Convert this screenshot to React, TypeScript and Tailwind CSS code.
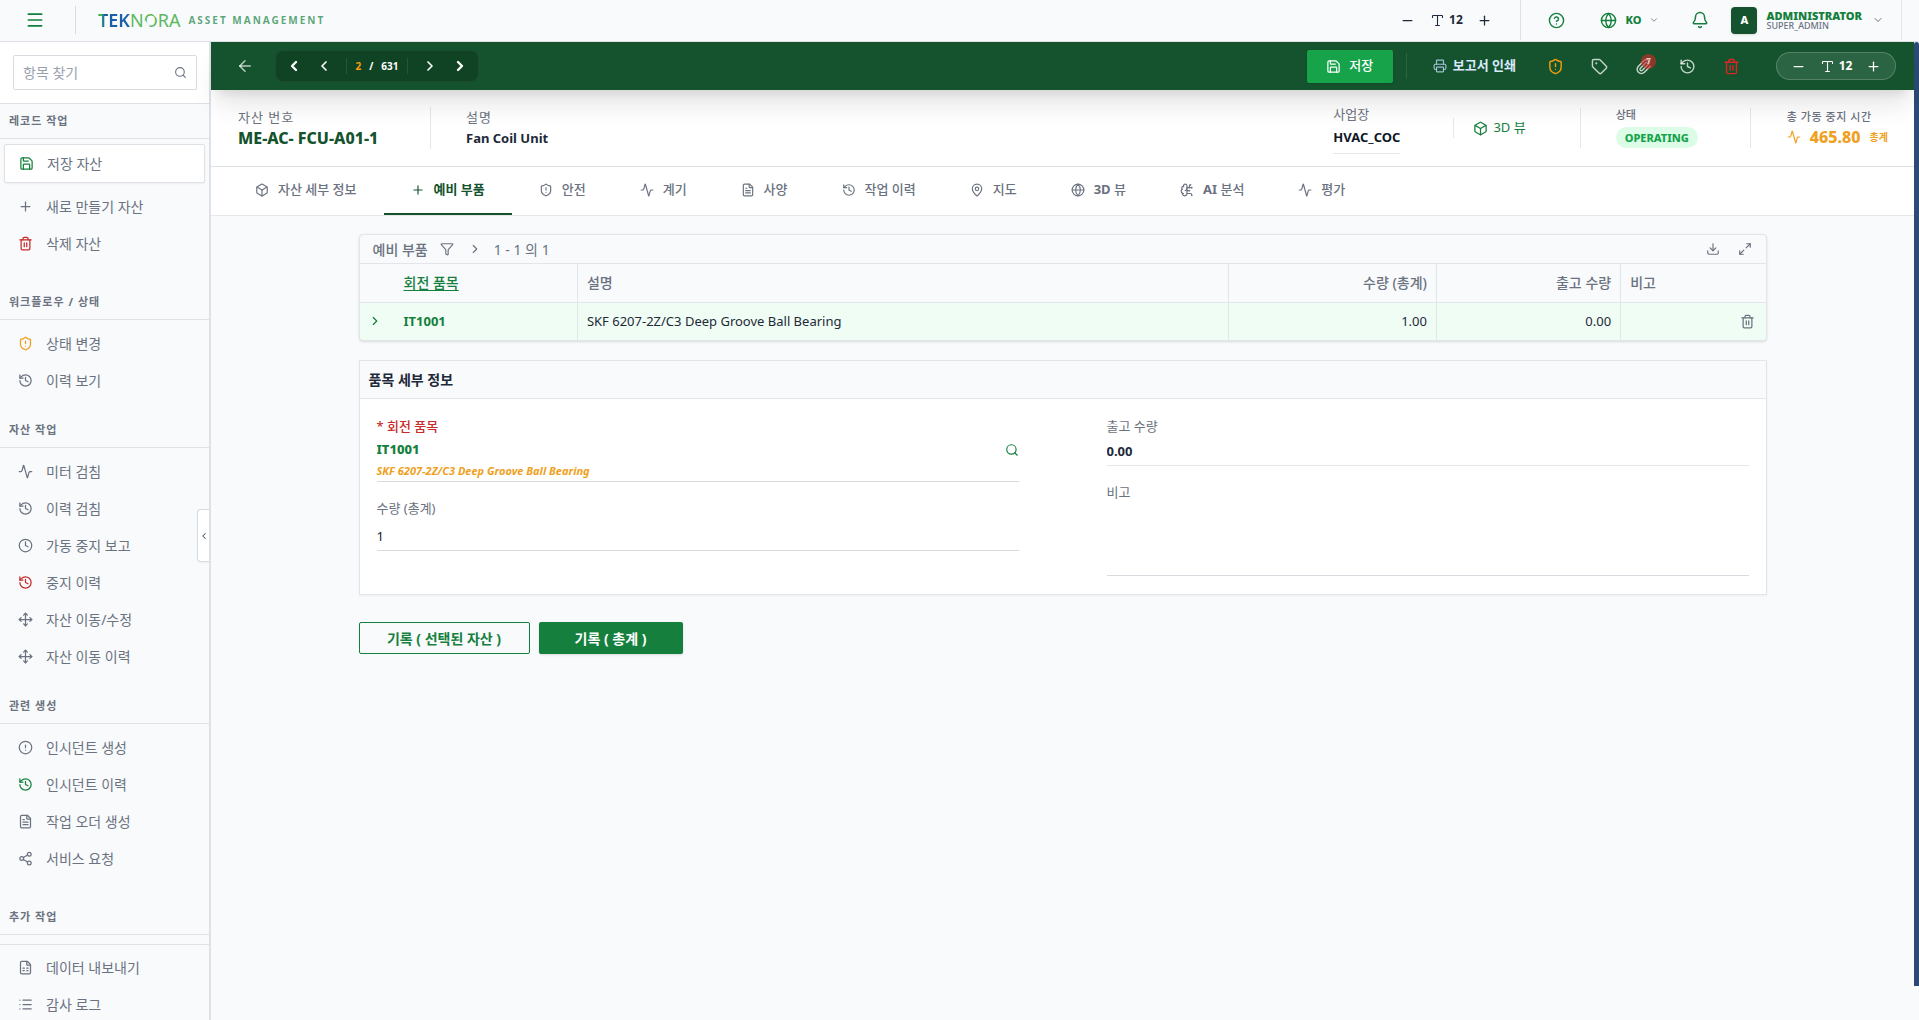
import type { ReactNode } from "react";
import {
  Activity,
  ArrowLeft,
  Bell,
  Box,
  BrainCircuit,
  ChevronDown,
  ChevronLeft,
  ChevronRight,
  CircleAlert,
  CircleHelp,
  Clock,
  Download,
  FileSpreadsheet,
  FileText,
  Filter,
  Globe,
  History,
  List,
  type LucideIcon,
  MapPin,
  Maximize2,
  Menu,
  Minus,
  Move,
  Paperclip,
  Plus,
  Printer,
  Save,
  Search,
  Share2,
  ShieldAlert,
  Tag,
  Trash2,
  Type,
} from "lucide-react";
import clsx from "clsx";

type ActionItem = {
  label: string;
  icon: LucideIcon;
  iconClass?: string;
  primary?: boolean;
};

type ActionSection = {
  title: string;
  items: ActionItem[];
  spacious?: boolean;
};

type TabItem = {
  prefix?: string;
  label: string;
  icon: LucideIcon;
  active?: boolean;
};

const SECTIONS: ActionSection[] = [
  {
    title: "레코드 작업",
    spacious: true,
    items: [
      { label: "저장 자산", icon: Save, iconClass: "text-[#15803d]", primary: true },
      { label: "새로 만들기 자산", icon: Plus },
      { label: "삭제 자산", icon: Trash2, iconClass: "text-[#c92a2a]" },
    ],
  },
  {
    title: "워크플로우 / 상태",
    items: [
      { label: "상태 변경", icon: ShieldAlert, iconClass: "text-[#f0a020]" },
      { label: "이력 보기", icon: History },
    ],
  },
  {
    title: "자산 작업",
    items: [
      { label: "미터 검침", icon: Activity },
      { label: "이력 검침", icon: History },
      { label: "가동 중지 보고", icon: Clock },
      { label: "중지 이력", icon: History, iconClass: "text-[#c92a2a]" },
      { label: "자산 이동/수정", icon: Move },
      { label: "자산 이동 이력", icon: Move },
    ],
  },
  {
    title: "관련 생성",
    spacious: true,
    items: [
      { label: "인시던트 생성", icon: CircleAlert },
      { label: "인시던트 이력", icon: History, iconClass: "text-[#15803d]" },
      { label: "작업 오더 생성", icon: FileText },
      { label: "서비스 요청", icon: Share2 },
    ],
  },
  { title: "추가 작업", items: [] },
];

const FOOTER_ITEMS: ActionItem[] = [
  { label: "데이터 내보내기", icon: FileSpreadsheet },
  { label: "감사 로그", icon: List },
];

const TABS: TabItem[] = [
  { label: "자산 세부 정보", icon: Box },
  { label: "예비 부품", icon: Plus, active: true },
  { label: "안전", icon: ShieldAlert },
  { label: "계기", icon: Activity },
  { label: "사양", icon: FileText },
  { label: "작업 이력", icon: History },
  { label: "지도", icon: MapPin },
  { prefix: "3D", label: " 뷰", icon: Globe },
  { prefix: "AI", label: " 분석", icon: BrainCircuit },
  { label: "평가", icon: Activity },
];

function Logo() {
  return (
    <div className="flex text-[18px] leading-none">
      <span className="bg-linear-to-r from-[#4caf50] from-10% to-[#1b5fa8] to-20% bg-clip-text font-semibold text-transparent">TEK</span>
      <span className="text-[#5cb85c]">N</span>
      <span className="relative text-[#5cb85c]">
        O
        <svg viewBox="0 0 14 18" className="absolute inset-0 h-full w-full" aria-hidden="true">
          <path d="M9 2 L14 7 M0 10 L5 16" stroke="#f8fafc" strokeWidth="2.2" fill="none" />
        </svg>
      </span>
      <span className="text-[#5cb85c]">RA</span>
    </div>
  );
}

function FontSizer({ inverted }: { inverted?: boolean }) {
  return (
    <div
      className={clsx(
        "flex items-center justify-between",
        inverted ? "h-7 w-30 rounded-full border border-white/20 bg-white/10 px-3.5 text-white" : "w-[92px] text-gray-800",
      )}
    >
      <button aria-label="글꼴 축소">
        <Minus size={15} />
      </button>
      <span className="flex items-center gap-1 text-[12px] font-bold">
        <Type size={15} strokeWidth={1.75} />
        12
      </span>
      <button aria-label="글꼴 확대">
        <Plus size={15} />
      </button>
    </div>
  );
}

function TopBar() {
  return (
    <header className="flex h-[42px] shrink-0 items-center border-b border-[#dee2e6] bg-[#f8fafc] pb-px pl-[25px]">
      <button aria-label="메뉴" className="text-[#15803d]">
        <Menu size={20} />
      </button>
      <div className="mx-[30px] h-7 w-px shrink-0 bg-[#d8dce1]" />
      <div className="-ml-2 flex items-center gap-2">
        <Logo />
        <span className="text-[10px] font-bold tracking-[2px] text-[#15803d]/70">ASSET MANAGEMENT</span>
      </div>

      <div className="ml-auto flex h-full items-center">
        <FontSizer />
        <div className="ml-7 h-full w-px bg-[#dee2e6]" />
        <button aria-label="도움말" className="ml-[27px] text-[#15803d]">
          <CircleHelp size={17} />
        </button>
        <button className="ml-[35px] flex items-center gap-2 text-[11px] font-extrabold text-[#15803d]">
          <Globe size={17} />
          KO
          <ChevronDown size={10} className="text-gray-500" />
        </button>
        <button aria-label="알림" className="ml-8 text-[#15803d]">
          <Bell size={18} />
        </button>
        <button className="ml-[22px] flex items-center text-left">
          <span className="flex h-[27px] w-[26px] items-center justify-center rounded-sm bg-[#14532d] text-[11px] font-extrabold text-white shadow">
            A
          </span>
          <span className="ml-[9px] flex flex-col">
            <span className="text-[11px] leading-[11px] font-black text-[#15803d]">ADMINISTRATOR</span>
            <span className="text-[9px] leading-[9px] font-medium text-gray-500">SUPER_ADMIN</span>
          </span>
          <ChevronDown size={12} className="ml-2.5 text-gray-500" />
        </button>
        <div className="mx-[17px] h-full w-px bg-[#e5e7eb]" />
      </div>
    </header>
  );
}

function ActionButton({ label, icon: Icon, iconClass = "text-[#6b7280]", primary }: ActionItem) {
  return (
    <button
      className={clsx(
        "flex shrink-0 items-center gap-[13px] text-left text-[14px] text-[#6b7280]",
        primary
          ? "mx-1 mb-[5px] h-[39px] rounded-xs border border-[#dee2e6] bg-white px-3.5 shadow-xs"
          : "h-[37px] px-[18px]",
      )}
    >
      <Icon size={15} className={clsx("shrink-0", iconClass)} />
      {label}
    </button>
  );
}

function Sidebar() {
  return (
    <aside className="relative flex w-[211px] shrink-0 flex-col border-r-2 border-[#dee2e6] bg-[#f8fafc]">
      <div className="shrink-0 border-b border-[#dee2e6] bg-white py-[13px] pr-3 pl-[13px]">
        <label className="flex h-[35px] items-center rounded-xs border border-[#d8dce1] bg-white px-[9px]">
          <input
            type="text"
            aria-label="항목 찾기"
            placeholder="항목 찾기"
            className="w-full min-w-0 text-[14px] outline-none placeholder:text-gray-400"
          />
          <Search size={13} className="shrink-0 text-[#6b7280]" />
        </label>
      </div>

      <div className="flex min-h-0 flex-1 flex-col overflow-hidden">
        {SECTIONS.map((section) => (
          <section key={section.title} className="flex shrink-0 flex-col">
            <h3 className="flex h-[35px] items-center border-b border-[#dee2e6] px-[9px] text-[11px] font-bold tracking-[1px] text-[#6b7280]">
              {section.title}
            </h3>
            <div className={clsx("flex flex-col pt-[5px]", section.spacious ? "pb-[23px]" : "pb-[14px]")}>
              {section.items.map((item) => (
                <ActionButton key={item.label} {...item} />
              ))}
            </div>
          </section>
        ))}
      </div>

      <div className="flex h-19 shrink-0 flex-col overflow-hidden border-t border-[#dee2e6] pt-1">
        {FOOTER_ITEMS.map((item) => (
          <ActionButton key={item.label} {...item} />
        ))}
      </div>

      <button
        aria-label="사이드바 접기"
        className="absolute top-[467px] right-0 flex h-[53px] w-3 items-center justify-center rounded-l-sm border border-r-0 border-[#d8dce1] bg-white text-gray-600 shadow-xs"
      >
        <ChevronLeft size={10} strokeWidth={2.5} />
      </button>
    </aside>
  );
}

function Toolbar() {
  return (
    <div className="relative z-10 flex h-12 shrink-0 items-center bg-[#14532d] pr-[18px] pl-[25px] text-white shadow-xl">
      <button aria-label="뒤로" className="text-white/70">
        <ArrowLeft size={18} />
      </button>
      <div className="ml-[21px] flex h-8 w-[204px] items-center justify-between rounded-lg border border-white/5 bg-black/20 px-2.5">
        <button aria-label="처음"><ChevronLeft size={16} strokeWidth={3.5} /></button>
        <button aria-label="이전"><ChevronLeft size={16} strokeWidth={2.5} /></button>
        <div className="flex h-4 items-center gap-2 border-x border-white/10 px-2 text-[10px] font-bold">
          <span className="text-[#f59e0b]">2</span>
          <span>/</span>
          <span>631</span>
        </div>
        <button aria-label="다음"><ChevronRight size={16} strokeWidth={2.5} /></button>
        <button aria-label="마지막"><ChevronRight size={16} strokeWidth={3.5} /></button>
      </div>

      <div className="ml-auto flex items-center">
        <button className="flex h-[33px] w-[86px] items-center justify-center gap-2 rounded-xs bg-[#16a34a] text-[13px] font-medium shadow">
          <Save size={15} />
          저장
        </button>
        <div className="mx-[13px] h-[26px] w-px bg-white/10" />
        <button className="ml-[13px] flex items-center gap-[6px] text-[13px] font-bold text-[#dbeafe]">
          <Printer size={14} className="text-[#bfdbfe]/80" />
          보고서 인쇄
        </button>
        <div className="ml-[31px] flex items-center gap-[27px] text-white/75">
          <button aria-label="상태 변경" className="text-[#f59e0b]"><ShieldAlert size={17} /></button>
          <button aria-label="태그"><Tag size={17} /></button>
          <button aria-label="첨부 파일" className="relative">
            <Paperclip size={17} />
            <span className="absolute -top-1 -right-1 flex size-[15px] items-center justify-center rounded-full bg-[#dc2626]/60 text-[8px] font-bold">
              7
            </span>
          </button>
          <button aria-label="이력"><History size={17} /></button>
          <button aria-label="삭제" className="text-[#dc2626]"><Trash2 size={17} /></button>
        </div>
        <div className="ml-9">
          <FontSizer inverted />
        </div>
      </div>
    </div>
  );
}

function AssetHeader() {
  return (
    <div className="flex h-[77px] shrink-0 items-center border-b border-[#dee2e6] bg-white pr-[26px] pl-[27px] shadow-sm">
      <div className="flex w-[192px] flex-col pb-[2px]">
        <span className="text-[13px] leading-[22px] tracking-[1px] text-[#6b7280]">자산 번호</span>
        <span className="text-[16px] leading-5 font-extrabold text-[#14532d]">ME-AC- FCU-A01-1</span>
      </div>
      <div className="h-[42px] w-px bg-[#e5e7eb]" />
      <div className="ml-[35px] flex flex-col pb-[2px]">
        <span className="text-[13px] leading-[22px] tracking-[1px] text-[#6b7280]">설명</span>
        <span className="text-[13px] leading-5 font-bold text-gray-800">Fan Coil Unit</span>
      </div>

      <div className="ml-auto flex items-center">
        <div className="flex flex-col">
          <span className="text-[13px] leading-[22px] text-[#6b7280]">사업장</span>
          <span className="border-b border-[#e5e7eb] pb-1 text-[13px] leading-6 font-bold text-gray-900">HVAC_COC</span>
        </div>
        <div className="ml-[53px] h-5 w-px bg-[#e5e7eb]" />
        <button className="ml-[19px] flex items-center gap-[5px] text-[13px] text-[#15803d]">
          <Box size={15} />
          3D 뷰
        </button>
        <div className="ml-[54px] h-10 w-px bg-[#e5e7eb]" />
        <div className="ml-[35px] flex flex-col items-start gap-1 pb-[2px]">
          <span className="text-[11px] leading-4 font-medium text-[#6b7280]">상태</span>
          <span className="rounded-full bg-[#dcfce7] px-[9px] text-[11px] leading-[21px] font-extrabold text-[#16a34a]">
            OPERATING
          </span>
        </div>
        <div className="ml-[52px] h-10 w-px bg-[#e5e7eb]" />
        <div className="ml-9 flex flex-col pb-[2px]">
          <span className="text-[11px] leading-5 font-medium tracking-wider text-[#6b7280]">총 가동 중지 시간</span>
          <span className="flex items-center text-[#f0a020]">
            <Activity size={14} />
            <span className="ml-[9px] text-[16px] leading-5 font-extrabold">465.80</span>
            <span className="ml-[9px] text-[10px] font-bold">총계</span>
          </span>
        </div>
      </div>
    </div>
  );
}

function TabBar() {
  return (
    <nav className="flex h-[49px] shrink-0 border-b border-[#e5e7eb] bg-white px-[17px]">
      {TABS.map(({ prefix, label, icon: Icon, active }) => (
        <button
          key={label}
          className={clsx(
            "flex items-center gap-[9px] border-b-2 px-[27px] text-[13px]",
            active ? "border-[#14532d] font-bold text-[#14532d]" : "border-transparent font-medium text-[#6b7280]",
          )}
        >
          <Icon size={14} />
          <span className="whitespace-pre">
            {prefix && <b>{prefix}</b>}
            {label}
          </span>
        </button>
      ))}
    </nav>
  );
}

function SparePartsTable() {
  return (
    <section className="overflow-hidden rounded-sm border border-[#e2e5e9] bg-[#f8fafc] shadow">
      <div className="flex h-[29px] items-center border-b border-[#e2e5e9] pr-3.5 pl-[13px] text-[14px] text-[#6b7280]">
        <h2 className="font-medium">예비 부품</h2>
        <button aria-label="필터" className="ml-3"><Filter size={14} /></button>
        <button aria-label="다음 페이지" className="ml-3.5"><ChevronRight size={14} /></button>
        <span className="ml-3">1 - 1 의 1</span>
        <div className="ml-auto flex items-center gap-[18px]">
          <button aria-label="다운로드"><Download size={14} /></button>
          <button aria-label="확대"><Maximize2 size={14} /></button>
        </div>
      </div>
      <table className="w-full table-fixed border-collapse text-[14px]">
        <colgroup>
          <col className="w-[15.5%]" />
          <col className="w-[46.3%]" />
          <col className="w-[14.8%]" />
          <col className="w-[13.1%]" />
          <col className="w-[10.3%]" />
        </colgroup>
        <thead>
          <tr className="h-[38px] border-b border-[#e2e5e9] text-[#6b7280]">
            <th className="border-r border-[#e2e5e9] pl-11 text-left font-medium text-[#15803d] underline underline-offset-2">회전 품목</th>
            <th className="border-r border-[#e2e5e9] px-[9px] text-left font-medium">설명</th>
            <th className="border-r border-[#e2e5e9] px-[9px] text-right font-medium">수량 (총계)</th>
            <th className="border-r border-[#e2e5e9] px-[9px] text-right font-medium">출고 수량</th>
            <th className="px-[9px] text-left font-medium">비고</th>
          </tr>
        </thead>
        <tbody>
          <tr className="h-[38px] bg-[#f0fdf4] text-[13px] text-gray-800">
            <td className="border-r border-[#e2e5e9] pl-2">
              <span className="flex items-center gap-[22px] font-bold text-[#15803d]">
                <ChevronRight size={14} />
                IT1001
              </span>
            </td>
            <td className="border-r border-[#e2e5e9] px-[9px]">SKF 6207-2Z/C3 Deep Groove Ball Bearing</td>
            <td className="border-r border-[#e2e5e9] px-[9px] text-right">1.00</td>
            <td className="border-r border-[#e2e5e9] px-[9px] text-right">0.00</td>
            <td className="pr-[11px]">
              <button aria-label="행 삭제" className="ml-auto block text-[#6b7280]"><Trash2 size={15} /></button>
            </td>
          </tr>
        </tbody>
      </table>
    </section>
  );
}

function Field({ label, htmlFor, required, children }: { label: string; htmlFor: string; required?: boolean; children: ReactNode }) {
  return (
    <div className="flex flex-col">
      <label
        htmlFor={htmlFor}
        className={clsx("text-[13px] leading-5", required ? "font-medium text-[#c92a2a]" : "text-[#6b7280]")}
      >
        {required && "* "}
        {label}
      </label>
      {children}
    </div>
  );
}

function ItemDetails() {
  return (
    <section className="border border-[#e2e5e9] bg-white shadow-xs">
      <h2 className="flex h-[38px] items-center border-b border-[#e2e5e9] bg-[#f8fafc] px-[9px] text-[14px] font-bold text-gray-800">
        품목 세부 정보
      </h2>
      <div className="grid grid-cols-2 gap-x-[88px] px-[17px] pt-[17px] pb-[18px]">
        <div className="flex flex-col gap-4">
          <Field label="회전 품목" htmlFor="item" required>
            <div className="border-b border-[#d8dce1] pb-[2px]">
              <div className="flex h-[27px] items-center">
                <input id="item" defaultValue="IT1001" className="min-w-0 flex-1 text-[13px] font-extrabold text-[#15803d] outline-none" />
                <button aria-label="품목 검색" className="text-[#15803d]"><Search size={14} /></button>
              </div>
              <p className="text-[11px] leading-4 font-bold text-[#f0a020] italic">SKF 6207-2Z/C3 Deep Groove Ball Bearing</p>
            </div>
          </Field>
          <Field label="수량 (총계)" htmlFor="qty">
            <input id="qty" defaultValue="1" className="h-[33px] border-b border-[#d8dce1] pt-1 text-[13px] text-gray-900 outline-none" />
          </Field>
        </div>
        <div className="flex flex-col gap-4">
          <Field label="출고 수량" htmlFor="issued">
            <input id="issued" defaultValue="0.00" readOnly className="h-[30px] border-b border-[#e2e5e9] text-[13px] font-bold text-gray-800 outline-none" />
          </Field>
          <Field label="비고" htmlFor="remark">
            <textarea id="remark" className="h-[74px] resize-none border-b border-[#d8dce1] text-[13px] outline-none" />
          </Field>
        </div>
      </div>
    </section>
  );
}

export default function App() {
  return (
    <div className="flex h-screen flex-col overflow-hidden bg-[#f8fafc] font-['Noto_Sans','Noto_Sans_CJK_KR',sans-serif]">
      <TopBar />
      <div className="flex min-h-0 flex-1">
        <Sidebar />
        <main className="flex min-w-0 flex-1 flex-col">
          <Toolbar />
          <AssetHeader />
          <TabBar />
          <div className="flex-1 px-6 pt-[18px]">
            <div className="mx-auto flex max-w-[1408px] flex-col">
              <SparePartsTable />
              <div className="mt-[19px]">
                <ItemDetails />
              </div>
              <div className="mt-[27px] flex gap-[9px] text-[14px] font-bold">
                <button className="h-8 w-[171px] rounded-xs border border-[#15803d] text-[#15803d]">기록 ( 선택된 자산 )</button>
                <button className="h-8 w-36 rounded-xs bg-[#15803d] text-white shadow-sm">기록 ( 총계 )</button>
              </div>
            </div>
          </div>
        </main>
        <div className="w-[5px] shrink-0">
          <div className="h-[96.5%] rounded-t-sm bg-[#2c4a73]" />
        </div>
      </div>
    </div>
  );
}
